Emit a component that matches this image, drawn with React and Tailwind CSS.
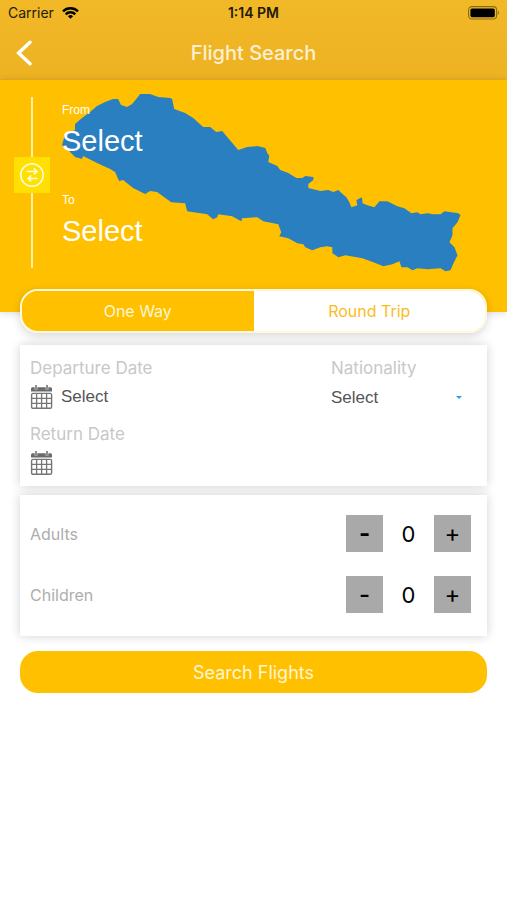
import { useState } from 'react'

const MAP_OUTLINE =
  'M62 145 65 135 75 130 75 124 82 118 90 112 97 106 105 102 113 99 118 99 121 105 127 107 132 104 137 98 140 94 150 94 158 97 170 98 172 99 174 109 185 113 193 118 203 127 210 127 216 132 222 131 227 137 238 150 247 147 257 146 265 148 267 153 269 156 268 162 277 166 280 170 288 173 296 178 302 178 305 176 313 177 313 180 308 184 308 188 320 191 328 190 333 192 338 190 340 192 346 197 349 202 351 207 357 205 356 200 361 197 362 199 362 203 367 205 374 207 379 201 387 201 397 206 404 208 411 213 417 212 420 214 427 213 433 214 440 214 444 211 458 213 460 215 457 222 452 228 452 235 449 242 454 247 457 255 453 263 450 270 445 271 440 268 427 269 417 268 412 270 407 267 401 267 399 261 392 264 383 266 373 262 362 258 345 255 338 257 332 253 332 247 327 246 320 247 312 250 305 247 303 244 297 243 288 238 279 236 281 232 278 224 263 221 257 217 242 218 241 221 232 216 218 214 217 217 213 219 207 214 187 211 185 203 171 202 157 192 150 191 145 194 133 188 123 180 119 181 115 172 110 169 97 163 83 156 82 159 75 157 68 150Z'

function StatusBar() {
  return (
    <div className="grid h-[26px] grid-cols-3 items-center px-2 text-[14px] leading-4 text-[#1f1a08]">
      <div className="flex items-center gap-2">
        <span>Carrier</span>
        <svg viewBox="0 0 17 12" className="h-3 w-[17px]" fill="none" stroke="#000" strokeWidth="2.4">
          <path d="M1 4.4a10.6 10.6 0 0 1 15 0" />
          <path d="M3.7 7.3a6.8 6.8 0 0 1 9.6 0" />
          <path d="M8.5 11.8 5.9 9.2a3.7 3.7 0 0 1 5.2 0z" fill="#000" stroke="none" />
        </svg>
      </div>
      <span className="text-center font-semibold">1:14 PM</span>
      <svg viewBox="0 0 32 14" className="h-[14px] w-8 justify-self-end" fill="none">
        <rect x="1.6" y="0.6" width="28" height="12.4" rx="3.4" stroke="#8a6a1a" strokeWidth="1.1" />
        <rect x="3.4" y="2.4" width="24.4" height="8.8" rx="1.6" fill="#000" />
        <path d="M30.8 4.8c1.4.5 1.4 3.5 0 4z" fill="#8a6a1a" />
      </svg>
    </div>
  )
}

function CalendarIcon() {
  return (
    <svg viewBox="0 0 23 24" className="h-6 w-[23px]" fill="none" stroke="#757575">
      <path d="M1 6.6V3.8a1.5 1.5 0 0 1 1.5-1.5h18A1.5 1.5 0 0 1 22 3.8v2.8z" fill="#6b6b6b" stroke="none" />
      <path d="M6 0v4.8M17 0v4.8" stroke="#fff" strokeWidth="2.6" />
      <path d="M6 0v4.8M17 0v4.8" stroke="#6b6b6b" strokeWidth="1.5" />
      <rect x="1.6" y="8.4" width="20" height="14.9" rx="1.4" strokeWidth="1.4" />
      <path d="M6.6 8.4v15M11.6 8.4v15M16.6 8.4v15M1.6 13.4h20M1.6 18.4h20" strokeWidth="1.3" />
    </svg>
  )
}

function Counter({ label, value, onChange, minusClass }) {
  return (
    <div className="flex items-center">
      <span className="flex-1 text-[16px] text-[#adadad]">{label}</span>
      <button
        aria-label={`Remove ${label}`}
        onClick={() => onChange(Math.max(0, value - 1))}
        className={`size-[37px] bg-[#a9a9a9] text-[24px] leading-8 text-black ${minusClass}`}
      >
        -
      </button>
      <output className="w-[51px] text-center text-[22px] leading-8 text-black">{value}</output>
      <button
        aria-label={`Add ${label}`}
        onClick={() => onChange(value + 1)}
        className="size-[37px] bg-[#a9a9a9] text-[24px] leading-8 text-black"
      >
        +
      </button>
    </div>
  )
}

export default function App() {
  const [trip, setTrip] = useState('one')
  const [adults, setAdults] = useState(0)
  const [children, setChildren] = useState(0)

  const tab = (active) =>
    active ? 'flex-1 bg-[#ffc000] text-[#fff6d5]' : 'flex-1 bg-white text-[#fbbc1c]'

  return (
    <div className="min-h-screen bg-white font-['Inter',sans-serif]">
      <header className="border-b border-[#e8ae20] bg-linear-to-b from-[#f1b827] to-[#eeb223]">
        <StatusBar />
        <div className="grid h-[53px] grid-cols-[1fr_auto_1fr] items-center px-4">
          <button aria-label="Back" className="w-6">
            <svg viewBox="0 0 17 26" className="h-[26px] w-[17px]" fill="none" stroke="#fff" strokeWidth="3.4" strokeLinecap="round">
              <path d="M14 2.2 2.6 13 14 23.8" />
            </svg>
          </button>
          <h1 className="text-[20px] font-medium text-[#fdf0d2]">Flight Search</h1>
        </div>
      </header>

      <section className="relative flex gap-3 bg-[#ffc000] pt-[17px] pb-11 pl-[14px] font-['Liberation_Sans',Arial,sans-serif] shadow-[0_1px_8px_rgba(0,0,0,0.15)]">
        <svg viewBox="61 93 400 179" className="absolute top-[13px] left-[12%] w-[79%]" fill="#2a7fc1">
          <path d={MAP_OUTLINE} />
        </svg>
        <div className="flex w-9 flex-col items-center">
          <div className="h-[60px] w-[2px] bg-[#fff0a8]" />
          <button aria-label="Swap airports" className="flex size-9 items-center justify-center bg-[#ffe000]">
            <svg viewBox="0 0 24 24" className="size-6" fill="none" stroke="#fffce0" strokeWidth="1.5">
              <circle cx="12" cy="12" r="11.2" />
              <path d="M6.5 8.5H17M13.8 5.6 17 8.5l-3.2 2.9M17.5 15.5H8M11.2 12.6 8 15.5l3.2 2.9" />
            </svg>
          </button>
          <div className="h-[75px] w-[2px] bg-[#fff0a8]" />
        </div>
        <div className="relative flex flex-col gap-[33px] pt-[5px] text-left text-white">
          <button className="flex flex-col items-start gap-[5px]">
            <span className="text-[12px] leading-4">From</span>
            <span className="text-[29px] leading-9">Select</span>
          </button>
          <button className="flex flex-col items-start gap-[5px]">
            <span className="text-[12px] leading-4">To</span>
            <span className="text-[29px] leading-9">Select</span>
          </button>
        </div>
      </section>

      <main className="relative -mt-[23px] flex flex-col px-5">
        <div className="flex h-11 overflow-hidden rounded-[18px] border-2 border-[#fff8dc] text-[16px] shadow-[0_3px_10px_rgba(0,0,0,0.16)]">
          <button aria-pressed={trip === 'one'} onClick={() => setTrip('one')} className={tab(trip === 'one')}>
            One Way
          </button>
          <button aria-pressed={trip === 'round'} onClick={() => setTrip('round')} className={tab(trip === 'round')}>
            Round Trip
          </button>
        </div>

        <div className="mt-3 flex bg-white px-[10px] pt-3 pb-[11px] shadow-[0_0_10px_rgba(0,0,0,0.18)]">
          <div className="flex flex-1 flex-col gap-[14px]">
            <div className="flex flex-col gap-[6px]">
              <span id="departure" className="text-[17px] leading-[22px] text-[#c8c8c8]">Departure Date</span>
              <button aria-labelledby="departure" className="flex h-6 items-center gap-2 font-['Liberation_Sans',Arial,sans-serif] text-[17px] text-[#555]">
                <CalendarIcon />
                Select
              </button>
            </div>
            <div className="flex flex-col gap-[6px]">
              <span id="return" className="text-[17px] leading-[22px] text-[#c8c8c8]">Return Date</span>
              <button aria-labelledby="return" className="flex h-6 items-center">
                <CalendarIcon />
              </button>
            </div>
          </div>
          <div className="flex w-[146px] flex-col gap-[6px]">
            <label htmlFor="nationality" className="text-[17px] leading-[22px] text-[#c8c8c8]">Nationality</label>
            <div className="flex items-center pr-[15px]">
              <select id="nationality" className="h-6 min-w-0 flex-1 appearance-none font-['Liberation_Sans',Arial,sans-serif] text-[17px] text-[#555]">
                <option>Select</option>
              </select>
              <svg viewBox="0 0 6 3" className="h-[3px] w-[6px]" fill="#2a9df4">
                <path d="M0 0h6L3 3z" />
              </svg>
            </div>
          </div>
        </div>

        <div className="mt-[9px] flex flex-col gap-6 bg-white pt-5 pr-4 pb-[23px] pl-[10px] shadow-[0_0_10px_rgba(0,0,0,0.18)]">
          <Counter label="Adults" value={adults} onChange={setAdults} minusClass="font-bold" />
          <Counter label="Children" value={children} onChange={setChildren} minusClass="font-medium" />
        </div>

        <button className="mt-[15px] h-[42px] rounded-[18px] bg-[#ffc000] text-[18px] text-[#fff6d5]">
          Search Flights
        </button>
      </main>
    </div>
  )
}
